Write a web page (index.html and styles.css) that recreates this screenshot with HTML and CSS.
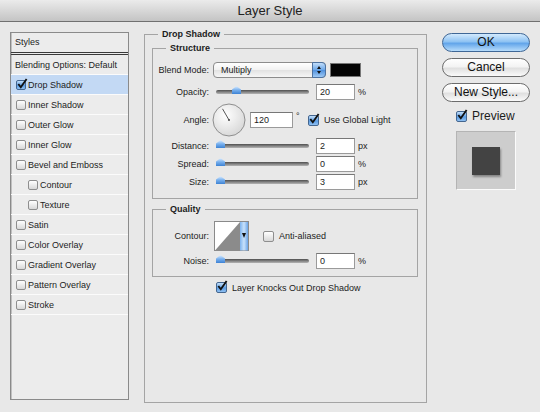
FILE: index.html
```html
<!DOCTYPE html>
<html lang="en">
<head>
    <meta charset="UTF-8">
    <title>Layer Style</title>
    <link rel="stylesheet" href="styles.css">
</head>
<body>
    <div class="titlebar">Layer Style</div>

    <div class="dialog">
        <div class="style-list">
            <div class="list-head">Styles</div>
            <div class="list-item">Blending Options: Default</div>
            <div class="list-item selected"><span class="cb on"><svg viewBox="0 0 13 13"><path d="M2.5 6.5 L5.2 10 L11.5 1"/></svg></span>Drop Shadow</div>
            <div class="list-item"><span class="cb"></span>Inner Shadow</div>
            <div class="list-item"><span class="cb"></span>Outer Glow</div>
            <div class="list-item"><span class="cb"></span>Inner Glow</div>
            <div class="list-item"><span class="cb"></span>Bevel and Emboss</div>
            <div class="list-item sub"><span class="cb"></span>Contour</div>
            <div class="list-item sub"><span class="cb"></span>Texture</div>
            <div class="list-item"><span class="cb"></span>Satin</div>
            <div class="list-item"><span class="cb"></span>Color Overlay</div>
            <div class="list-item"><span class="cb"></span>Gradient Overlay</div>
            <div class="list-item"><span class="cb"></span>Pattern Overlay</div>
            <div class="list-item"><span class="cb"></span>Stroke</div>
        </div>

        <fieldset class="group outer">
            <legend>Drop Shadow</legend>

            <fieldset class="group">
                <legend>Structure</legend>

                <div class="row">
                    <span class="lbl">Blend Mode:</span>
                    <div class="select">Multiply<span class="stepper"><i class="up"></i><i class="down"></i></span></div>
                    <span class="swatch"></span>
                </div>

                <div class="row opacity-row">
                    <span class="lbl">Opacity:</span>
                    <div class="slider"><span class="thumb" style="left: 16px"></span></div>
                    <span class="field">20</span>
                    <span class="unit">%</span>
                </div>

                <div class="row angle-row">
                    <span class="lbl">Angle:</span>
                    <svg class="dial" viewBox="0 0 34 34" width="34" height="34">
                        <defs>
                            <radialGradient id="dialFill" cx="40%" cy="35%" r="70%">
                                <stop offset="0" stop-color="#ffffff"/>
                                <stop offset="1" stop-color="#d6d6d6"/>
                            </radialGradient>
                        </defs>
                        <circle cx="17" cy="17" r="16" fill="url(#dialFill)" stroke="#8e8e8e" stroke-width="1"/>
                        <line x1="17" y1="17" x2="10.5" y2="5.8" stroke="#555" stroke-width="1"/>
                        <circle cx="17" cy="17" r="1" fill="#444"/>
                    </svg>
                    <span class="field angle-field">120</span>
                    <span class="degree">°</span>
                    <span class="cb on big"><svg viewBox="0 0 13 13"><path d="M2.5 6.5 L5.2 10 L11.5 1"/></svg></span>
                    <span class="cb-text">Use Global Light</span>
                </div>

                <div class="row">
                    <span class="lbl">Distance:</span>
                    <div class="slider"><span class="thumb" style="left: 0px"></span></div>
                    <span class="field">2</span>
                    <span class="unit">px</span>
                </div>

                <div class="row">
                    <span class="lbl">Spread:</span>
                    <div class="slider"><span class="thumb" style="left: 0px"></span></div>
                    <span class="field">0</span>
                    <span class="unit">%</span>
                </div>

                <div class="row">
                    <span class="lbl">Size:</span>
                    <div class="slider"><span class="thumb" style="left: 0px"></span></div>
                    <span class="field">3</span>
                    <span class="unit">px</span>
                </div>
            </fieldset>

            <fieldset class="group quality">
                <legend>Quality</legend>

                <div class="row contour-row">
                    <span class="lbl">Contour:</span>
                    <svg class="contour" viewBox="0 0 35 30" width="35" height="30">
                        <defs>
                            <linearGradient id="dropBlue" x1="0" y1="0" x2="1" y2="0">
                                <stop offset="0" stop-color="#7fb4ee"/>
                                <stop offset="0.5" stop-color="#c9e2fb"/>
                                <stop offset="1" stop-color="#6aa3e6"/>
                            </linearGradient>
                        </defs>
                        <rect x="0.5" y="0.5" width="34" height="29" fill="#fff" stroke="#8a8a8a"/>
                        <polygon points="1,29.5 26,1 26,29.5" fill="#8b8b8b"/>
                        <rect x="26" y="1" width="8" height="28.5" fill="url(#dropBlue)"/>
                        <polygon points="28,12 32,12 30,17" fill="#111"/>
                    </svg>
                    <span class="cb aa"></span>
                    <span class="cb-text">Anti-aliased</span>
                </div>

                <div class="row">
                    <span class="lbl">Noise:</span>
                    <div class="slider"><span class="thumb" style="left: 0px"></span></div>
                    <span class="field">0</span>
                    <span class="unit">%</span>
                </div>
            </fieldset>

            <div class="knockout">
                <span class="cb on big"><svg viewBox="0 0 13 13"><path d="M2.5 6.5 L5.2 10 L11.5 1"/></svg></span>
                <span class="cb-text">Layer Knocks Out Drop Shadow</span>
            </div>
        </fieldset>

        <div class="actions">
            <button class="aqua default">OK</button>
            <button class="aqua">Cancel</button>
            <button class="aqua">New Style...</button>
            <div class="preview-toggle">
                <span class="cb on big"><svg viewBox="0 0 13 13"><path d="M2.5 6.5 L5.2 10 L11.5 1"/></svg></span>
                <span>Preview</span>
            </div>
            <div class="preview-box"><div class="preview-swatch"></div></div>
        </div>
    </div>
</body>
</html>
```

FILE: styles.css
```css
body {
    margin: 0;
    width: 540px;
    height: 412px;
    overflow: hidden;
    background-color: #e8e8e8;
    font-family: "Liberation Sans", Arial, sans-serif;
    font-size: 9px;
    color: #1c1c1c;
}

.titlebar {
    height: 21px;
    line-height: 21px;
    border-bottom: 1px solid #707070;
    background: linear-gradient(#ebebeb, #c4c4c4);
    text-align: center;
    font-size: 13px;
    color: #222;
}

.dialog {
    display: flex;
    align-items: flex-start;
    padding-left: 10px;
}

/* left style list */
.style-list {
    box-sizing: border-box;
    width: 119px;
    height: 368px;
    margin-top: 10px;
    border: 1px solid #8a8a8a;
    box-shadow: inset 1px 0 0 #c0c0c0;
    background-color: #ececec;
}

.list-head {
    height: 19px;
    line-height: 19px;
    padding-left: 4px;
    border-bottom: 3px double #3a3a3a;
}

.list-item {
    display: flex;
    align-items: center;
    height: 19px;
    padding-left: 4px;
    border-bottom: 1px solid #fbfbfb;
}

.list-item .cb {
    margin-left: 1px;
    margin-right: 2px;
}

.list-item.sub {
    padding-left: 16px;
}

.list-item.selected {
    background-color: #c3d9f4;
}

/* checkboxes */
.cb {
    position: relative;
    box-sizing: border-box;
    flex: none;
    width: 10px;
    height: 10px;
    border: 1px solid #8e8e8e;
    border-radius: 2px;
    background: linear-gradient(#ffffff, #d8d8d8);
}

.cb.big {
    width: 11px;
    height: 11px;
}

.cb.on {
    border-color: #44668f;
    background: linear-gradient(#c4e0fb, #5b9ce3 55%, #8fc0f2);
}

.cb svg {
    position: absolute;
    left: -1px;
    top: -3px;
    width: 12px;
    height: 12px;
    fill: none;
    stroke: #111;
    stroke-width: 2;
}

.cb-text {
    margin-left: 5px;
}

/* group boxes */
.group {
    margin: 0;
    padding: 0;
    min-width: 0;
    border: 1px solid #a4a4a4;
}

.group legend {
    padding: 0 4px;
    margin-left: 13px;
    line-height: 11px;
    font-weight: bold;
}

.group.outer {
    box-sizing: border-box;
    width: 283px;
    height: 374px;
    margin: 7px 0 0 15px;
    padding: 3px 8px 0 7px;
}

.group.outer > legend {
    margin-left: 6px;
}

.group.outer > .group {
    padding-top: 8px;
    padding-bottom: 8px;
}

.group.quality {
    margin-top: 5px;
    padding-top: 6px !important;
    padding-bottom: 7px !important;
}

.row {
    display: flex;
    align-items: center;
    height: 16px;
    margin-top: 2px;
}

.group > legend + .row {
    margin-top: 0;
}

.row.opacity-row {
    margin-top: 6px;
}

.row.angle-row {
    height: 32px;
    margin-top: 4px;
}

.row.contour-row {
    height: 30px;
    margin-top: 0;
    margin-bottom: 1px;
}

.lbl {
    flex: none;
    width: 56px;
    text-align: right;
}

/* blend mode select */
.select {
    position: relative;
    box-sizing: border-box;
    width: 113px;
    height: 16px;
    margin-left: 4px;
    padding-left: 7px;
    line-height: 14px;
    border: 1px solid #8c8c8c;
    border-radius: 4px;
    background: linear-gradient(#ffffff, #f1f1f1 50%, #e2e2e2 51%, #f6f6f6);
}

.stepper {
    position: absolute;
    top: -1px;
    right: -1px;
    width: 14px;
    height: 16px;
    border: 1px solid #4d72a0;
    box-sizing: border-box;
    border-radius: 0 4px 4px 0;
    background: linear-gradient(#c2defa, #6aa6e8 50%, #4f90dd 51%, #9fcaf5);
}

.stepper i {
    position: absolute;
    left: 4px;
    width: 0;
    height: 0;
    border-left: 2.5px solid transparent;
    border-right: 2.5px solid transparent;
}

.stepper .up {
    top: 3px;
    border-bottom: 3px solid #111;
}

.stepper .down {
    top: 8px;
    border-top: 3px solid #111;
}

.swatch {
    width: 31px;
    height: 14px;
    margin-left: 4px;
    border: 1px solid #777;
    box-sizing: border-box;
    background-color: #050505;
}

/* sliders */
.slider {
    position: relative;
    flex: none;
    width: 93px;
    height: 4px;
    margin-left: 7px;
    border-radius: 2px;
    background: linear-gradient(#4e4e4e, #8d8d8d 60%, #b5b5b5);
}

.thumb {
    position: absolute;
    top: -4px;
    width: 9px;
    height: 8px;
    background: linear-gradient(#e2f0ff, #78b0ee 50%, #3d82d4);
    clip-path: polygon(50% 0, 100% 45%, 100% 100%, 0 100%, 0 45%);
}

/* number fields */
.field {
    box-sizing: border-box;
    width: 39px;
    height: 16px;
    margin-left: 7px;
    padding-left: 3px;
    line-height: 14px;
    border: 1px solid #9a9a9a;
    border-top-color: #777;
    background-color: #ffffff;
}

.unit {
    margin-left: 3px;
}

.dial {
    flex: none;
    margin-left: 3px;
}

.field.angle-field {
    width: 43px;
    margin-left: 4px;
}

.degree {
    width: 12px;
    margin-left: 3px;
    align-self: flex-start;
    margin-top: 7px;
}

.contour {
    flex: none;
    margin-left: 5px;
}

.cb.aa {
    width: 11px;
    height: 11px;
    margin-left: 14px;
}

.knockout {
    display: flex;
    align-items: center;
    margin-top: 5px;
    padding-left: 64px;
}

/* right side buttons */
.actions {
    display: flex;
    flex-direction: column;
    width: 88px;
    margin: 11px 0 0 15px;
}

.aqua {
    box-sizing: border-box;
    height: 19px;
    margin: 0 0 6px 0;
    padding: 0;
    border: 1px solid #6c6c6c;
    border-radius: 10px;
    font-family: "Liberation Sans", Arial, sans-serif;
    font-size: 12px;
    line-height: 17px;
    color: #111;
    background: linear-gradient(#ffffff, #f3f3f3 45%, #e0e0e0 55%, #fafafa);
}

.aqua.default {
    border-color: #3f6796;
    background: linear-gradient(#d3eafd, #8fc3f3 45%, #62a5ea 55%, #b7dcfb);
}

.preview-toggle {
    display: flex;
    align-items: center;
    margin-top: 1px;
    padding-left: 14px;
    font-size: 12px;
}

.preview-toggle .cb {
    margin-right: 5px;
}

.preview-box {
    display: flex;
    align-items: center;
    justify-content: center;
    box-sizing: border-box;
    width: 60px;
    height: 59px;
    margin: 8px 0 0 14px;
    border: 1px solid #b4b4b4;
    border-right-color: #fbfbfb;
    border-bottom-color: #fbfbfb;
    background-color: #cdcdcd;
}

.preview-swatch {
    width: 28px;
    height: 28px;
    background-color: #434343;
    box-shadow: 1px 2px 2px rgba(0, 0, 0, 0.35);
}
```
